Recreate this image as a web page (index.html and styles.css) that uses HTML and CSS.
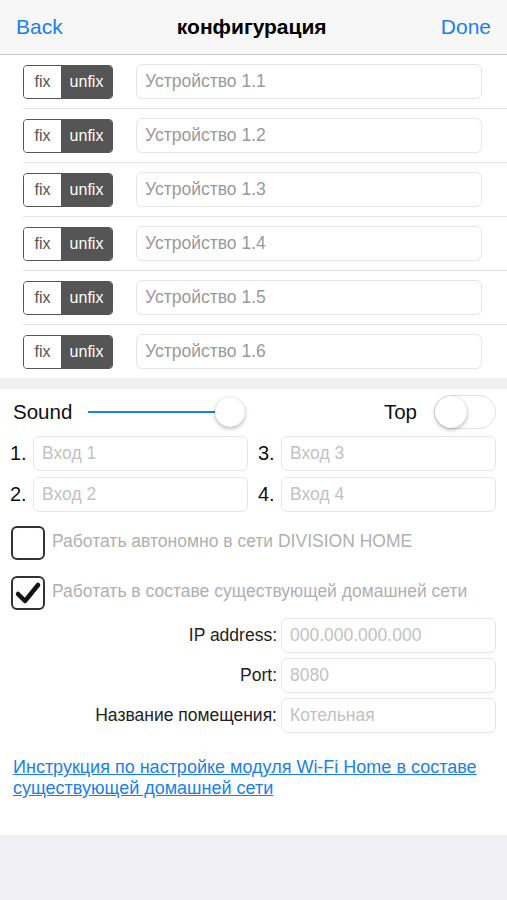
FILE: index.html
```html
<!DOCTYPE html>
<html lang="ru">
<head>
  <meta charset="UTF-8">
  <meta name="viewport" content="width=device-width, initial-scale=1.0">
  <title>конфигурация</title>
  <link rel="stylesheet" href="styles.css">
</head>
<body>
  <div class="screen">
    <!-- Навигация -->
    <div class="navbar">
      <a class="nav-btn">Back</a>
      <span class="nav-title">конфигурация</span>
      <a class="nav-btn">Done</a>
    </div>

    <!-- Устройства -->
    <div class="devices">
      <div class="device-row">
        <div class="segment"><span class="seg-fix">fix</span><span class="seg-unfix">unfix</span></div>
        <input class="device-input" type="text" placeholder="Устройство 1.1">
      </div>
      <div class="device-row">
        <div class="segment"><span class="seg-fix">fix</span><span class="seg-unfix">unfix</span></div>
        <input class="device-input" type="text" placeholder="Устройство 1.2">
      </div>
      <div class="device-row">
        <div class="segment"><span class="seg-fix">fix</span><span class="seg-unfix">unfix</span></div>
        <input class="device-input" type="text" placeholder="Устройство 1.3">
      </div>
      <div class="device-row">
        <div class="segment"><span class="seg-fix">fix</span><span class="seg-unfix">unfix</span></div>
        <input class="device-input" type="text" placeholder="Устройство 1.4">
      </div>
      <div class="device-row">
        <div class="segment"><span class="seg-fix">fix</span><span class="seg-unfix">unfix</span></div>
        <input class="device-input" type="text" placeholder="Устройство 1.5">
      </div>
      <div class="device-row">
        <div class="segment"><span class="seg-fix">fix</span><span class="seg-unfix">unfix</span></div>
        <input class="device-input" type="text" placeholder="Устройство 1.6">
      </div>
    </div>

    <div class="band"></div>

    <!-- Настройки -->
    <div class="settings">
      <div class="sound-row">
        <span class="label-lg">Sound</span>
        <div class="slider">
          <div class="slider-track"></div>
          <div class="slider-thumb"></div>
        </div>
        <span class="label-lg top-label">Top</span>
        <div class="switch"><div class="switch-knob"></div></div>
      </div>

      <div class="inputs-grid">
        <div class="num-field"><span class="num">1.</span><input class="field" type="text" placeholder="Вход 1"></div>
        <div class="num-field"><span class="num">3.</span><input class="field" type="text" placeholder="Вход 3"></div>
        <div class="num-field"><span class="num">2.</span><input class="field" type="text" placeholder="Вход 2"></div>
        <div class="num-field"><span class="num">4.</span><input class="field" type="text" placeholder="Вход 4"></div>
      </div>

      <div class="check-row">
        <div class="checkbox"></div>
        <span class="check-text">Работать автономно в сети DIVISION HOME</span>
      </div>
      <div class="check-row">
        <div class="checkbox">
          <svg width="30" height="30" viewBox="0 0 30 30"><path d="M5 16 L12 23 L25 7" fill="none" stroke="#111" stroke-width="4.5" stroke-linecap="round" stroke-linejoin="round"/></svg>
        </div>
        <span class="check-text">Работать в составе существующей домашней сети</span>
      </div>

      <div class="net-fields">
        <div class="net-row"><span class="net-label">IP address:</span><input class="field" type="text" placeholder="000.000.000.000"></div>
        <div class="net-row"><span class="net-label">Port:</span><input class="field" type="text" placeholder="8080"></div>
        <div class="net-row"><span class="net-label">Название помещения:</span><input class="field" type="text" placeholder="Котельная"></div>
      </div>

      <a class="help-link">Инструкция по настройке модуля Wi-Fi Home в составе существующей домашней сети</a>
    </div>
  </div>
</body>
</html>
```

FILE: styles.css
```css
body {
  margin: 0;
  padding: 0;
  background-color: #efeff4;
  font-family: "Liberation Sans", Arial, sans-serif;
  color: #111;
}

.screen {
  width: 507px;
}

.navbar {
  height: 54px;
  display: flex;
  align-items: center;
  justify-content: space-between;
  padding: 0 16px;
  background-color: #f7f7f7;
  border-bottom: 1px solid #c9c9cc;
}

.nav-btn {
  font-size: 21px;
  color: #1a7ff0;
}

.nav-title {
  font-size: 21px;
  font-weight: bold;
  color: #000;
}

.devices {
  background-color: #fff;
}

.device-row {
  height: 53px;
  margin-left: 23px;
  padding-right: 25px;
  display: flex;
  align-items: center;
  gap: 23px;
  border-bottom: 1px solid #e4e4e4;
}

.device-row:last-child {
  border-bottom: none;
}

.segment {
  display: flex;
  height: 32px;
  border: 1px solid #555;
  border-radius: 4px;
  overflow: hidden;
  font-size: 16px;
}

.seg-fix {
  width: 37px;
  display: flex;
  align-items: center;
  justify-content: center;
  background-color: #fff;
  color: #555;
}

.seg-unfix {
  width: 51px;
  display: flex;
  align-items: center;
  justify-content: center;
  background-color: #555;
  color: #fff;
}

.device-input, .field {
  flex: 1;
  width: 0;
  min-width: 0;
  height: 35px;
  box-sizing: border-box;
  border: 1px solid #e6e6e6;
  border-radius: 6px;
  padding: 0 8px;
  font-family: "Liberation Sans", Arial, sans-serif;
  font-size: 17.5px;
  background-color: #fff;
  outline: none;
}

.device-input::placeholder {
  color: #9a9a9a;
}

.field::placeholder {
  color: #c2c2c2;
}

.band {
  height: 11px;
  background-color: #efeff4;
}

.settings {
  background-color: #fff;
  padding-bottom: 36px;
}

.sound-row {
  height: 38px;
  padding: 4px 11px 0 13px;
  display: flex;
  align-items: center;
}

.label-lg {
  font-size: 20.5px;
  color: #111;
}

.slider {
  position: relative;
  width: 160px;
  height: 34px;
  margin-left: 16px;
  display: flex;
  align-items: center;
}

.slider-track {
  width: 130px;
  height: 2px;
  background-color: #1a7ff0;
}

.slider-thumb {
  position: absolute;
  left: 127px;
  top: 2px;
  width: 30px;
  height: 30px;
  border-radius: 50%;
  background-color: #fff;
  box-shadow: 0 2px 4px rgba(0, 0, 0, 0.25), 0 0 1px rgba(0, 0, 0, 0.2);
}

.top-label {
  margin-left: auto;
  margin-right: 17px;
}

.switch {
  width: 60px;
  height: 32px;
  border: 1px solid #e3e3e3;
  border-radius: 17px;
  background-color: #fff;
  display: flex;
  align-items: center;
}

.switch-knob {
  width: 32px;
  height: 32px;
  border-radius: 50%;
  background-color: #fff;
  box-shadow: 0 2px 4px rgba(0, 0, 0, 0.25), 0 0 1px rgba(0, 0, 0, 0.2);
}

.inputs-grid {
  display: grid;
  grid-template-columns: minmax(0, 1fr) minmax(0, 1fr);
  column-gap: 10px;
  row-gap: 6px;
  padding: 5px 11px 0 10px;
}

.num-field {
  display: flex;
  align-items: center;
}

.num {
  width: 23px;
  font-size: 20px;
  color: #111;
}

.check-row {
  display: flex;
  align-items: center;
  gap: 7px;
  padding-left: 11px;
  height: 34px;
}

.inputs-grid + .check-row {
  margin-top: 14px;
}

.check-row + .check-row {
  margin-top: 16px;
}

.checkbox {
  width: 30px;
  height: 30px;
  border: 2px solid #333;
  border-radius: 6px;
  display: flex;
  align-items: center;
  justify-content: center;
}

.check-text {
  font-size: 17.5px;
  color: #b0b0b0;
  margin-top: -4px;
}

.net-fields {
  display: flex;
  flex-direction: column;
  gap: 5px;
  margin-top: 8px;
  padding-right: 11px;
}

.net-row {
  display: flex;
  align-items: center;
}

.net-label {
  width: 281px;
  padding-right: 4px;
  box-sizing: border-box;
  text-align: right;
  font-size: 17.5px;
  color: #222;
}

.help-link {
  display: block;
  margin: 24px 13px 0 13px;
  font-size: 18px;
  line-height: 21px;
  color: #1a7ff0;
  text-decoration: underline;
}
```
